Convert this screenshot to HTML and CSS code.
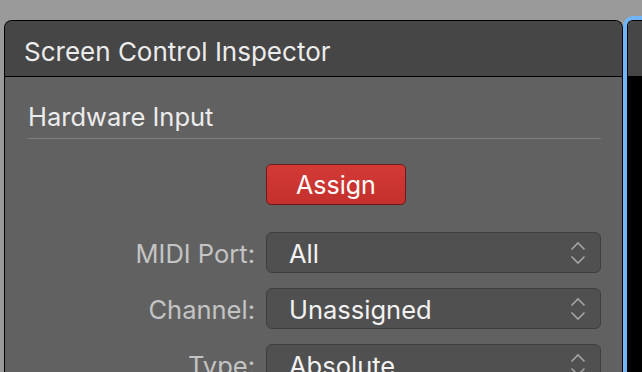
FILE: index.html
```html
<!DOCTYPE html>
<html lang="en">
<head>
    <meta charset="UTF-8">
    <title>Screen Control Inspector</title>
    <link rel="stylesheet" href="styles.css">
</head>
<body>
    <div class="inspector">
        <div class="inspector-header">Screen Control Inspector</div>
        <div class="inspector-body">
            <div class="section-title">Hardware Input</div>
            <div class="assign-row">
                <button class="assign-btn">Assign</button>
            </div>
            <div class="fields">
                <label class="field-label">MIDI Port:</label>
                <div class="select">
                    <span>All</span>
                    <svg class="chevrons" width="16" height="24" viewBox="0 0 16 24"><path d="M1.5 8.5 L8 2 L14.5 8.5 M1.5 15.5 L8 22 L14.5 15.5" fill="none" stroke="#a4a4a4" stroke-width="1.6"/></svg>
                </div>
                <label class="field-label">Channel:</label>
                <div class="select">
                    <span>Unassigned</span>
                    <svg class="chevrons" width="16" height="24" viewBox="0 0 16 24"><path d="M1.5 8.5 L8 2 L14.5 8.5 M1.5 15.5 L8 22 L14.5 15.5" fill="none" stroke="#a4a4a4" stroke-width="1.6"/></svg>
                </div>
                <label class="field-label">Type:</label>
                <div class="select">
                    <span>Absolute</span>
                    <svg class="chevrons" width="16" height="24" viewBox="0 0 16 24"><path d="M1.5 8.5 L8 2 L14.5 8.5 M1.5 15.5 L8 22 L14.5 15.5" fill="none" stroke="#a4a4a4" stroke-width="1.6"/></svg>
                </div>
            </div>
        </div>
    </div>

    <div class="next-panel">
        <div class="next-inner">
            <div class="next-header"></div>
            <div class="next-body"></div>
        </div>
    </div>
</body>
</html>
```

FILE: styles.css
```css
html, body {
    height: 100%;
}
body {
    margin: 0;
    background-color: #9a9a9a;
    font-family: Inter, "Noto Sans", sans-serif;
    display: flex;
    align-items: flex-start;
    overflow: hidden;
}
.inspector {
    margin: 20px 0 0 4px;
    width: 617px;
    height: 400px;
    border: 1px solid #000;
    border-bottom: none;
    border-radius: 8px 8px 0 0;
    background-color: #616161;
    overflow: hidden;
}
.inspector-header {
    height: 50px;
    padding: 5px 0 0 19px;
    line-height: 51px;
    font-size: 26px;
    color: #ececec;
    background-color: #464646;
    border-bottom: 1px solid #000;
    overflow: hidden;
}
.inspector-body {
    padding: 25px 21px 0 22px;
}
.section-title {
    height: 30px;
    line-height: 30px;
    font-size: 25.5px;
    color: #ececec;
    padding-bottom: 6px;
    border-bottom: 1px solid #7e7e7e;
    margin-left: 1px;
}
.assign-row {
    display: flex;
    margin-top: 25px;
    padding-left: 239px;
}
.assign-btn {
    width: 140px;
    height: 41px;
    font-family: Inter, "Noto Sans", sans-serif;
    font-size: 25px;
    color: #fff;
    background: linear-gradient(#d33a36, #c4302d);
    border: 1px solid #6a1c1a;
    border-radius: 5px;
    padding: 0;
}
.fields {
    display: grid;
    grid-template-columns: 228px 1fr;
    column-gap: 11px;
    row-gap: 15px;
    margin-top: 27px;
    align-items: center;
}
.field-label {
    text-align: right;
    font-size: 25.5px;
    color: #c4c4c4;
    padding-top: 2px;
}
.select {
    height: 39px;
    display: flex;
    align-items: center;
    justify-content: space-between;
    padding: 0 14px 0 22px;
    background-color: #505050;
    border: 1px solid #3e3e3e;
    border-radius: 6px;
    font-size: 25.5px;
    color: #f2f2f2;
}
.select span {
    padding-top: 2px;
}
.chevrons {
    display: block;
    margin-top: 1px;
}
.next-panel {
    margin-top: 16px;
    flex: 1;
    height: 400px;
    border: 4px solid #72b4f8;
    border-right: none;
    border-bottom: none;
    border-radius: 10px 0 0 0;
}
.next-inner {
    height: 100%;
    border: 1px solid #000;
    border-right: none;
    border-bottom: none;
    border-radius: 6px 0 0 0;
    overflow: hidden;
}
.next-header {
    height: 55px;
    background-color: #464646;
}
.next-body {
    height: 100%;
    background-color: #000;
}
```
